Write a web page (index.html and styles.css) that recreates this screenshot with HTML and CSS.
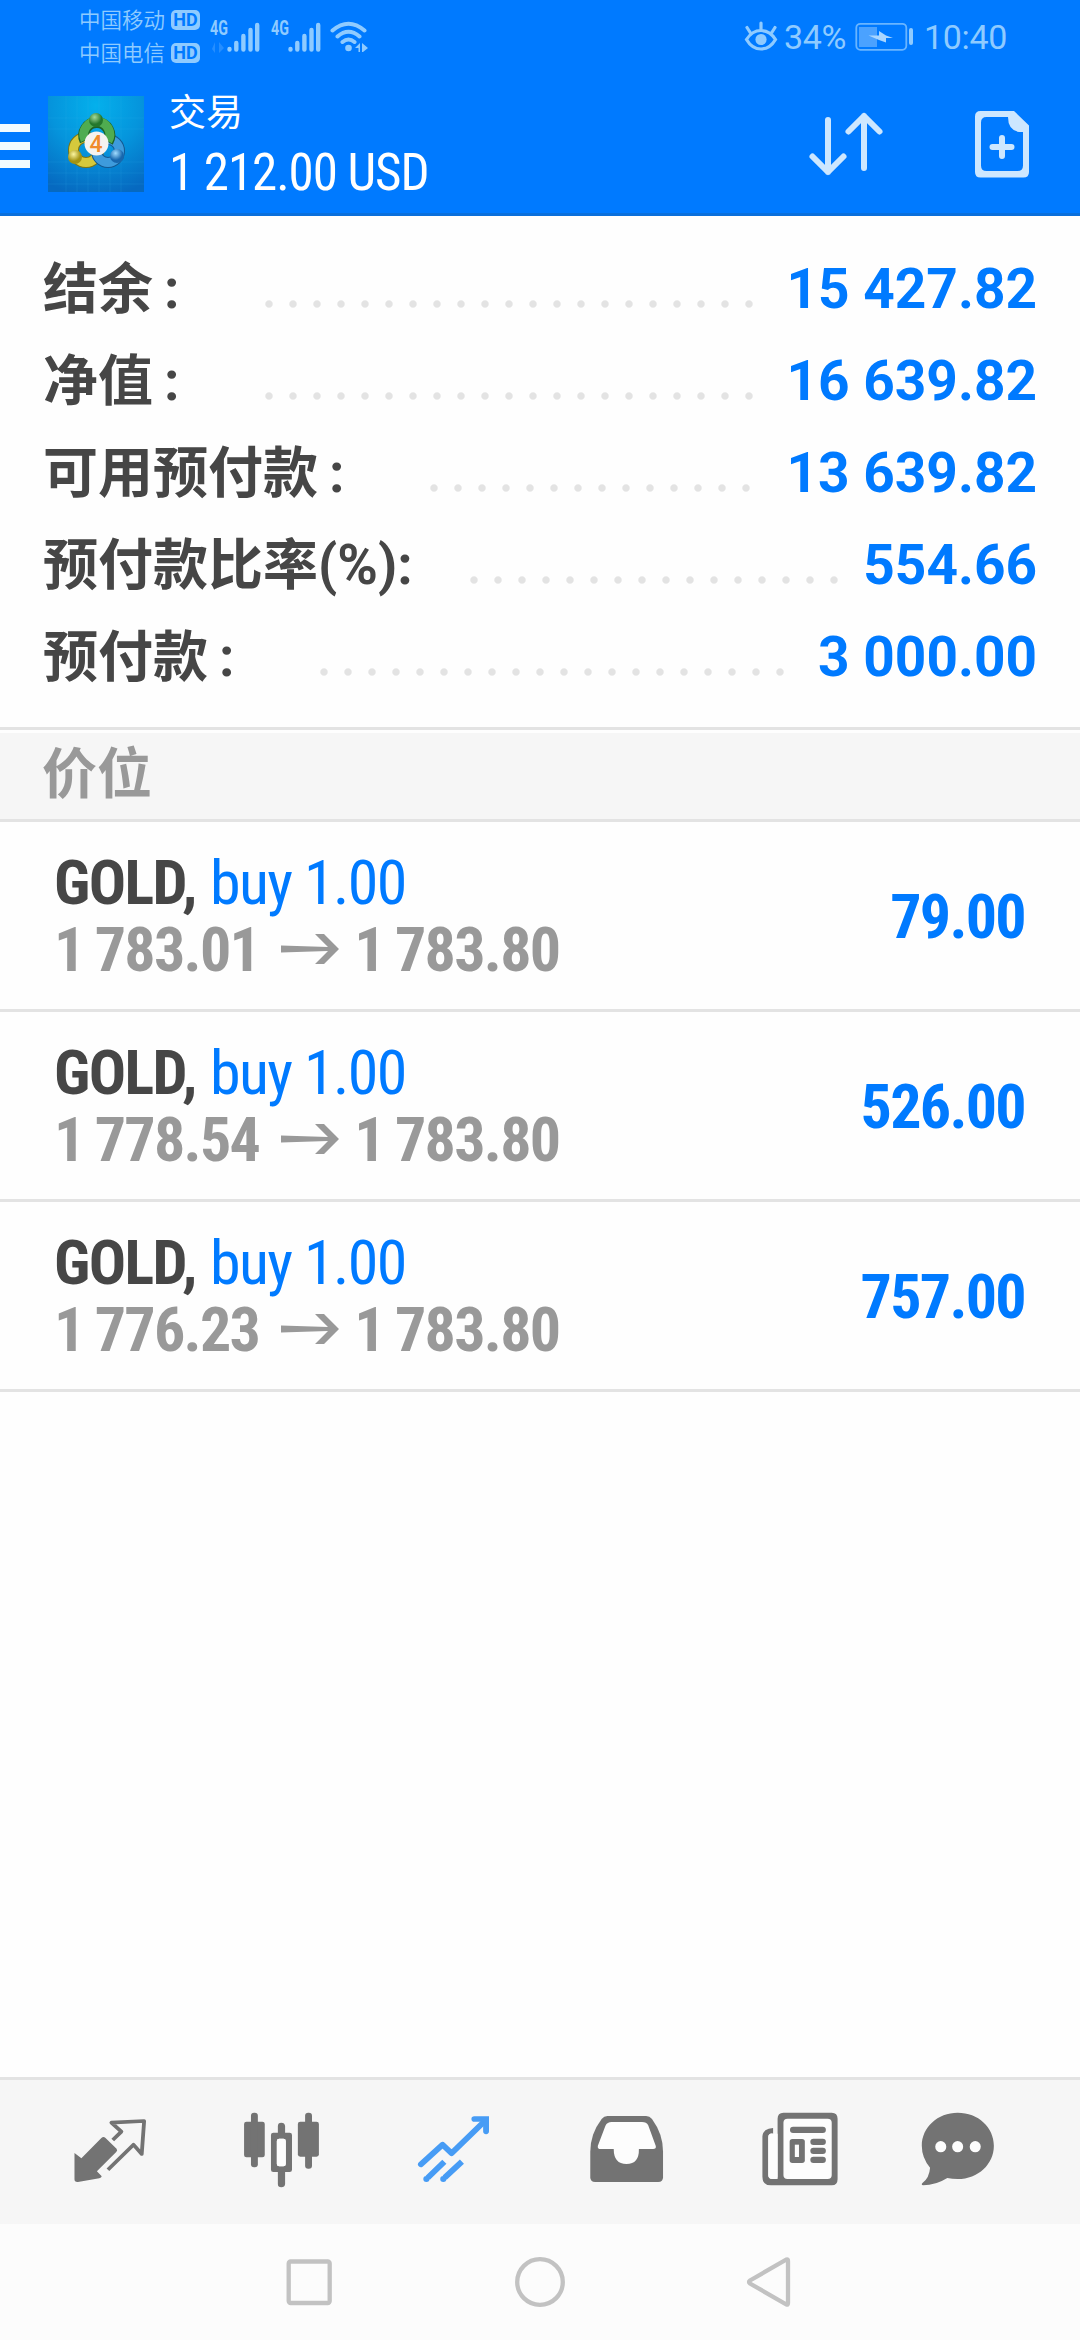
FILE: index.html
```html
<!DOCTYPE html>
<html lang="zh-CN">
<head>
<meta charset="utf-8">
<title>交易</title>
<link rel="stylesheet" href="styles.css">
</head>
<body>
<header class="top">
  <div class="status">
    <div class="carriers">
      <div class="carrier"><span>中国移动</span><b class="hd">HD</b></div>
      <div class="carrier"><span>中国电信</span><b class="hd">HD</b></div>
    </div>
    <div class="signal">
      <span class="net">4G</span>
      <svg width="52" height="34" viewBox="0 0 52 34"><g stroke="#8fcbff" stroke-width="4.400" stroke-linecap="round"><path d="M19.500 29v.6M26.300 23v6.600M33.400 16v13.600M40.500 10v19.600M47.200 5v24.600"/></g><path d="M5 22v11l-3-4zM9 33V22l5 6z" fill="#3d9bff" opacity=".6"/></svg>
    </div>
    <div class="signal">
      <span class="net">4G</span>
      <svg width="52" height="34" viewBox="0 0 52 34"><g stroke="#8fcbff" stroke-width="4.400" stroke-linecap="round"><path d="M19.500 29v.6M26.300 23v6.600M33.400 16v13.600M40.500 10v19.600M47.200 5v24.600"/></g></svg>
    </div>
    <svg class="wifi" width="40" height="34" viewBox="0 0 40 34"><g fill="none" stroke="#8fcbff" stroke-width="4" stroke-linecap="round"><path d="M3.500 10.500Q19.500-3 35.500 10.500M8.500 16.500Q19.500 7 30.500 16.500M13.500 22Q19.500 17 25.500 22"/></g><circle cx="19.500" cy="28" r="3.300" fill="#8fcbff"/><path d="M26 28l5-5v9h-1.500v-4zM33 23l6 5-5 4h-1z" fill="#8fcbff"/></svg>
    <svg class="eye" width="34" height="32" viewBox="0 0 34 32"><g fill="none" stroke="#8fcbff" stroke-width="3.200" stroke-linecap="round"><path d="M2.500 19.500Q8 10.500 17 10.500T31.500 19.500Q26 29 17 29T2.500 19.500zM17 10V3M6.500 13L3 7.500M27.500 13L31 7.500"/></g><circle cx="17" cy="19.500" r="5.600" fill="#8fcbff"/></svg>
    <span class="pct">34%</span>
    <svg class="battery" width="60" height="30" viewBox="0 0 60 30"><rect x="1.300" y="1.800" width="50" height="26" rx="4" fill="none" stroke="#69b5ff" stroke-width="1.800"/><rect x="4" y="5" width="18" height="20" fill="#4ba2ff"/><path d="M13.500 13.500H24V9L31 13.500L38 16H31V20.500L24 18z" fill="#a9d6ff"/><rect x="54" y="6" width="4" height="17" rx="2" fill="#8fcbff"/></svg>
    <span class="clock">10:40</span>
  </div>
  <div class="bar">
    <div class="menu"><i></i><i></i><i></i></div>
    <svg class="logo" width="96" height="96" viewBox="0 0 96 96">
      <defs>
        <radialGradient id="sky" cx=".5" cy=".1" r=".95"><stop offset="0" stop-color="#04b0ec"/><stop offset=".5" stop-color="#0594dc"/><stop offset="1" stop-color="#0669c0"/></radialGradient>
        <radialGradient id="green" cx=".4" cy=".3"><stop offset="0" stop-color="#a5da9a"/><stop offset="1" stop-color="#24782c"/></radialGradient>
        <radialGradient id="gold" cx=".4" cy=".3"><stop offset="0" stop-color="#fbf5a0"/><stop offset="1" stop-color="#a39312"/></radialGradient>
        <radialGradient id="blue" cx=".4" cy=".3"><stop offset="0" stop-color="#a0dcff"/><stop offset="1" stop-color="#1767ae"/></radialGradient>
      </defs>
      <rect width="96" height="96" fill="url(#sky)"/>
      <path d="M18 0v96M29 0v96M40 0v96M51 0v96M62 0v96M73 0v96M0 22h96M0 33h96M0 66h96M0 77h96M0 88h96" stroke="#3fb4ec" stroke-width=".5" opacity=".3"/>
      <g fill="none" stroke-width="9">
        <circle cx="38" cy="54" r="12.500" stroke="#7d7410" stroke-width="11"/><circle cx="38" cy="54" r="12.500" stroke="#d5c93c"/>
        <circle cx="60" cy="55" r="11.500" stroke="#145992" stroke-width="11"/><circle cx="60" cy="55" r="11.500" stroke="#3e9bdc"/>
        <path d="M37 45A13 13 0 1 1 60 46" stroke="#1d6328" stroke-width="11"/><path d="M37 44A13 13 0 1 1 60 45" stroke="#4fac50"/>
      </g>
      <circle cx="48" cy="24" r="7" fill="url(#green)"/><circle cx="27" cy="61" r="7" fill="url(#gold)"/><circle cx="69" cy="60" r="7" fill="url(#blue)"/>
      <circle cx="48.500" cy="47.500" r="12" fill="#f5f3f0"/>
      <text x="48" y="55.500" text-anchor="middle" class="logo-num">4</text>
    </svg>
    <div class="titles">
      <div class="title">交易</div>
      <div class="profit"><span class="cond">1 212.00 USD</span></div>
    </div>
    <svg class="sort" width="80" height="70" viewBox="0 0 80 70"><g fill="none" stroke="#cde7ff" stroke-width="6" stroke-linecap="round" stroke-linejoin="round"><path d="M22 12v52M6.500 48.500L22 64l15.500-15.500M58 60V8M42.500 23.500L58 8l15.500 15.500"/></g></svg>
    <svg class="doc" width="56" height="68" viewBox="0 0 56 68"><path fill-rule="evenodd" d="M6.500 1H40L55 15.500V62q0 5.500-5.500 5.500h-43Q1 67.500 1 62V6.500Q1 1 6.500 1zM34 7H12.500Q7 7 7 12.500v43Q7 61 12.500 61h31Q49 61 49 55.500V22H45Q34 20 34 7z" fill="#cde7ff"/><path d="M28 28v18M18.500 37h19" stroke="#cde7ff" stroke-width="6" stroke-linecap="round"/></svg>
  </div>
</header>
<section class="summary">
  <div class="line"><span class="label">结余<span class="colon">:</span></span><i class="dots d21"></i><span class="amount">15 427.82</span></div>
  <div class="line"><span class="label">净值<span class="colon">:</span></span><i class="dots d21"></i><span class="amount">16 639.82</span></div>
  <div class="line"><span class="label">可用预付款<span class="colon">:</span></span><i class="dots d14"></i><span class="amount">13 639.82</span></div>
  <div class="line"><span class="label">预付款比率(%):</span><i class="dots d16"></i><span class="amount">554.66</span></div>
  <div class="line"><span class="label">预付款<span class="colon">:</span></span><i class="dots d20"></i><span class="amount">3 000.00</span></div>
</section>
<h2 class="section">价位</h2>
<main class="positions">
  <article class="position">
    <div class="info">
      <div class="deal"><b class="cond">GOLD,</b><span class="cond side">buy 1.00</span></div>
      <div class="prices"><b class="cond">1 783.01</b><svg class="to" width="58" height="32" viewBox="0 0 58 32"><path d="M0 12.500L47 14L34 1H43L58 16L43 31H34L47 18L0 19.500z"/></svg><b class="cond">1 783.80</b></div>
    </div>
    <b class="cond gain">79.00</b>
  </article>
  <article class="position">
    <div class="info">
      <div class="deal"><b class="cond">GOLD,</b><span class="cond side">buy 1.00</span></div>
      <div class="prices"><b class="cond">1 778.54</b><svg class="to" width="58" height="32" viewBox="0 0 58 32"><path d="M0 12.500L47 14L34 1H43L58 16L43 31H34L47 18L0 19.500z"/></svg><b class="cond">1 783.80</b></div>
    </div>
    <b class="cond gain">526.00</b>
  </article>
  <article class="position">
    <div class="info">
      <div class="deal"><b class="cond">GOLD,</b><span class="cond side">buy 1.00</span></div>
      <div class="prices"><b class="cond">1 776.23</b><svg class="to" width="58" height="32" viewBox="0 0 58 32"><path d="M0 12.500L47 14L34 1H43L58 16L43 31H34L47 18L0 19.500z"/></svg><b class="cond">1 783.80</b></div>
    </div>
    <b class="cond gain">757.00</b>
  </article>
</main>
<nav class="tabs">
  <svg width="80" height="80" viewBox="203 150 232 240" preserveAspectRatio="none"><path d="M216 279L236 295L294 234Q300 228 306 234L338 266Q342 271 337 276L281 334L295 349Q294 354 288 355L226 366Q216 367 216 358z" fill="#737373"/><path d="M327 240L352 215L323 188L418 183L411 282L387 254L313 329" fill="none" stroke="#737373" stroke-width="11" stroke-linejoin="round"/></svg>
  <svg width="80" height="80" viewBox="703 150 232 240" preserveAspectRatio="none"><g fill="#737373"><rect x="709" y="185" width="60" height="107" rx="7"/><rect x="729" y="158" width="20" height="164" rx="9"/><rect x="865" y="185" width="61" height="105" rx="7"/><rect x="886" y="158" width="20" height="168" rx="9"/><path fill-rule="evenodd" d="M794 218h47q7 0 7 7v104q0 7-7 7h-47q-7 0-7-7V225q0-7 7-7zM811 236q-7 0-7 7v69q0 7 7 7h12q7 0 7-7v-69q0-7-7-7z"/><path d="M807 220v-22q0-10 10-10t11 10v22zM807 334v38q0 10 10 10t11-10v-38z"/></g><rect x="804" y="236" width="26" height="83" rx="7" fill="#fdfdfd"/></svg>
  <svg width="80" height="80" viewBox="1202 150 232 240" preserveAspectRatio="none"><g fill="none" stroke="#479cf5" stroke-width="17" stroke-linejoin="round"><path d="M1222 313L1285 254L1311 280L1408 182" stroke-linecap="round"/><path d="M1377 177H1411V214" stroke-linecap="round" stroke-linejoin="miter"/><path d="M1290 305L1242 353M1341 305L1291 353"/></g><g fill="#479cf5"><circle cx="1238" cy="357" r="9"/><circle cx="1287" cy="357" r="9"/></g></svg>
  <svg width="80" height="80" viewBox="136.500 150 232 240" preserveAspectRatio="none"><path d="M196 168H308Q318 168 325 177Q357 222 357 275V352Q357 366 343 366H160Q146 366 146 352V275Q146 222 179 177Q186 168 196 168z" fill="#737373"/><path d="M208 186H296Q309 186 314 196L336 258Q338 267 328 267H287Q288 312 251 312T214 267H176Q166 267 168 257L190 197Q195 186 208 186z" fill="#fdfdfd"/></svg>
  <svg width="80" height="80" viewBox="639 150 232 240" preserveAspectRatio="none"><path d="M677 204V221Q663 219 663 232V346Q663 357 675 357H690V176Q690 158 707 158H847Q864 158 864 176V358Q864 376 847 376H671Q646 376 646 350V229Q648 205 677 204z" fill="#737373"/><path d="M677 221Q663 219 663 232V346Q663 357 675 357H684Q690 357 690 350V221z" fill="#fdfdfd"/><rect x="707" y="176" width="140" height="181" rx="12" fill="#fdfdfd"/><g fill="#737373"><rect x="726" y="200" width="104" height="19" rx="9"/><rect x="725" y="237" width="44" height="72" rx="8"/><rect x="785" y="236" width="45" height="19" rx="9"/><rect x="785" y="263" width="45" height="19" rx="9"/><rect x="785" y="290" width="45" height="19" rx="9"/></g><rect x="740" y="254" width="12" height="37" fill="#fdfdfd"/></svg>
  <svg width="80" height="80" viewBox="1098 150 232 240" preserveAspectRatio="none"><path d="M1213 158C1273 158 1318 202 1318 257S1273 357 1213 357Q1197 357 1183 354Q1149 376 1113 376Q1106 374 1111 369Q1131 353 1133 323Q1109 293 1109 257C1109 202 1155 158 1213 158z" fill="#737373"/><g fill="#fdfdfd"><ellipse cx="1164" cy="260" rx="16" ry="17"/><ellipse cx="1213" cy="260" rx="16" ry="17"/><ellipse cx="1264" cy="260" rx="16" ry="17"/></g></svg>
</nav>
<footer class="keys">
  <svg width="50" height="50" viewBox="0 0 50 50"><rect x="4.700" y="4.500" width="41" height="41.500" rx="2"/></svg>
  <svg width="50" height="50" viewBox="0 0 50 50"><circle cx="25" cy="25" r="22.800"/></svg>
  <svg width="50" height="50" viewBox="0 0 50 50"><path d="M40.500 2.500Q42 2 42 4V46Q42 48 40.500 47.500L4 26.500Q2 25 4 23.500z"/></svg>
</footer>
</body>
</html>
```
FILE: styles.css
```css
* { box-sizing: border-box; }
body {
  margin: 0;
  width: 1080px;
  height: 2340px;
  overflow: hidden;
  display: flex;
  flex-direction: column;
  background: #fefefe;
  font-family: Roboto, "Noto Sans CJK SC", sans-serif;
}
svg { display: block; flex: none; }
.cond {
  font-family: "Roboto Condensed", Roboto, sans-serif;
  font-stretch: 75%;
  white-space: pre;
}

.top {
  flex: none;
  height: 216px;
  background: #007aff;
  border-bottom: 3px solid #0a6fdb;
}
.status {
  display: flex;
  align-items: flex-start;
  height: 72px;
  padding-left: 79px;
  color: #8fcbff;
}
.carriers { width: 131px; padding-top: 3px; }
.carrier {
  display: flex;
  align-items: center;
  gap: 6px;
  height: 33px;
  font: 350 21.500px/33px "Noto Sans CJK SC", sans-serif;
}
.carrier span { margin-top: -2px; }
.hd {
  width: 29px;
  height: 20px;
  border-radius: 5px;
  background: #8fcbff;
  color: #007aff;
  font: 700 18px/20px Roboto, sans-serif;
  text-align: center;
}
.signal { position: relative; width: 61px; padding-top: 20px; }
.net {
  position: absolute;
  left: 0;
  top: 17px;
  font: 700 21px/22px Roboto, sans-serif;
  transform: scaleX(.68);
  transform-origin: left;
}
.wifi { margin: 20px 0 0 -3px; }
.eye { margin: 20px 0 0 375px; }
.pct, .clock { font-size: 34px; line-height: 40px; margin-top: 17px; }
.pct { margin-left: 6px; width: 71px; letter-spacing: -.3px; }
.battery { margin-top: 22px; }
.clock { margin-left: 9px; letter-spacing: -.3px; }

.bar { display: flex; align-items: flex-start; height: 141px; }
.menu {
  display: flex;
  flex-direction: column;
  gap: 10px;
  width: 30px;
  margin-top: 52px;
}
.menu i { height: 8px; background: #f2fbff; }
.logo { margin: 24px 0 0 18px; }
.logo-num { font: 500 23px Roboto, sans-serif; fill: #f08b2c; }
.titles { width: 582px; padding: 11px 0 0 25px; color: #fff; }
.title { font: 400 37px/54px "Noto Sans CJK SC", sans-serif; }
.profit { font-size: 51px; line-height: 60px; margin-top: 6px; letter-spacing: -1.050px; }
.sort { margin: 36px 0 0 80px; }
.doc { margin: 38px 0 0 88px; }

.summary { flex: none; height: 511px; padding: 27px 43px 0; }
.line { display: flex; height: 92px; line-height: 92px; font-size: 55px; font-weight: 700; }
.label { font-family: Roboto, "Noto Sans CJK SC", sans-serif; color: #464646; white-space: nowrap; }
.colon { display: inline-block; width: 55px; padding-left: 11px; }
.dots {
  flex: none;
  height: 8px;
  margin: 57px 0 0 49px;
  background: radial-gradient(circle at 12px 4px, #e3e3e3 3.200px, transparent 4.200px) 0 0 / 24px 8px;
}
.d21 { width: 504px; }
.d20 { width: 480px; }
.d16 { width: 384px; }
.d14 { width: 336px; }
.amount { margin-left: auto; color: #007aff; white-space: nowrap; }

.section {
  flex: none;
  height: 95px;
  margin: 0;
  padding-left: 42px;
  border-top: 3px solid #e3e3e3;
  border-bottom: 3px solid #e3e3e3;
  background: linear-gradient(#fefefe 3px, #f6f6f6 3px);
  color: #999;
  font: 700 55px/78px "Noto Sans CJK SC", sans-serif;
}

.position {
  display: flex;
  justify-content: space-between;
  height: 190px;
  padding: 0 55px 0 54px;
  border-bottom: 3px solid #e3e3e3;
  font-size: 62px;
}
.info { padding-top: 27px; }
.deal, .prices { display: flex; height: 67px; line-height: 67px; letter-spacing: -1.600px; }
.deal { color: #464646; }
.side { margin-left: 14px; color: #007aff; }
.prices { color: #999; letter-spacing: -1.700px; word-spacing: -1.500px; }
.to { margin: 17px 15px 0 22px; fill: #999; }
.gain { line-height: 189px; color: #007aff; letter-spacing: -1.700px; }

.tabs {
  flex: none;
  display: grid;
  grid-template-columns: 172px 172px 173px 173px 158px 80px;
  height: 147px;
  margin-top: auto;
  padding: 30px 0 0 70px;
  border-top: 3px solid #e3e3e3;
  background: #f6f6f6;
}
.keys {
  flex: none;
  display: flex;
  align-items: center;
  justify-content: center;
  gap: 181px;
  height: 116px;
  background: #fcfcfc;
}
.keys svg { fill: none; stroke: #c2c2c2; stroke-width: 4.300; }
```
